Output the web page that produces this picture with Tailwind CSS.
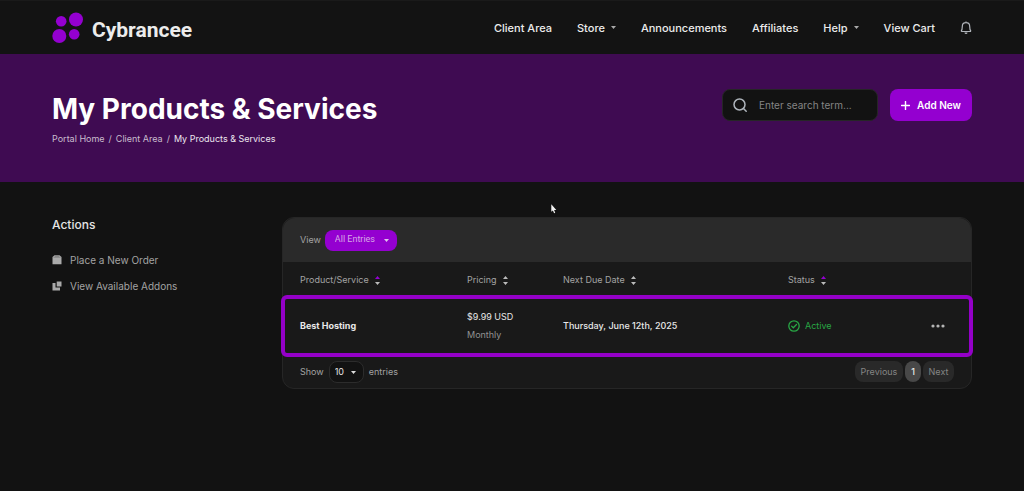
<!DOCTYPE html>
<html lang="en">

<head>
    <meta charset="UTF-8">
    <meta name="viewport" content="width=device-width, initial-scale=1.0">
    <title>My Products &amp; Services - Cybrancee</title>
    <script src="https://cdn.jsdelivr.net/npm/@tailwindcss/browser@4"></script>
</head>

<body class="min-h-screen bg-[#121212] font-['Inter','Liberation_Sans',sans-serif] text-[9px] text-[#a3a3a3]">
    <!-- Header -->
    <header class="flex h-[54px] items-center justify-between border-t border-[#1a1a1a] bg-[#131313] px-[52px]">
        <a href="#" class="flex items-center gap-[9px]">
            <svg class="h-8 w-[31px]" viewBox="0 0 31 32" fill="#9400d0">
                <circle cx="9.200" cy="9.300" r="5.300" />
                <circle cx="24" cy="7.500" r="7" />
                <circle cx="7.300" cy="24" r="7" />
                <circle cx="22.200" cy="22.300" r="5.300" />
            </svg>
            <span class="pt-1 font-['Roboto',sans-serif] text-[21px] leading-6 font-bold text-[#ececec]">Cybrancee</span>
        </a>
        <nav class="flex items-center gap-[25px] text-[11px] leading-4 font-medium text-[#ececec]">
            <a href="#">Client Area</a>
            <a href="#" class="flex items-center gap-1.5">Store
                <svg class="w-[5px]" viewBox="0 0 5 3" fill="#aaa"><path d="M0 0h5L2.500 3z" /></svg>
            </a>
            <a href="#">Announcements</a>
            <a href="#">Affiliates</a>
            <a href="#" class="flex items-center gap-1.5">Help
                <svg class="w-[5px]" viewBox="0 0 5 3" fill="#aaa"><path d="M0 0h5L2.500 3z" /></svg>
            </a>
            <a href="#">View Cart</a>
            <button type="button" aria-label="Notifications">
                <svg class="h-[14px] w-3" viewBox="0 0 12 14" fill="none" stroke="#b0b4ba" stroke-width="1.200" stroke-linejoin="round">
                    <path d="M1 10.500h10M1 10.500c1-1 1.300-2 1.300-5C2.300 3 4 1.700 6 1.700S9.700 3 9.700 5.500c0 3 .3 4 1.300 5M6 .5v1" />
                    <path d="M4.500 11.500a1.500 1.500 0 0 0 3 0z" fill="#b0b4ba" stroke="none" />
                </svg>
            </button>
        </nav>
    </header>

    <!-- Page banner -->
    <section class="flex h-32 items-start justify-between bg-[#3f0b52] px-[52px] pt-[35px]">
        <div>
            <h1 class="pt-0.5 text-[28px] leading-9 font-bold text-white">My Products &amp; Services</h1>
            <nav class="mt-1.5 flex gap-1 leading-3 text-[#c9bdce]">
                <a href="#">Portal Home</a><span>/</span>
                <a href="#">Client Area</a><span>/</span>
                <span class="text-[#ece6ee]">My Products &amp; Services</span>
            </nav>
        </div>
        <div class="flex gap-3">
            <label class="flex h-8 w-[156px] items-center gap-3 rounded-lg border border-[#262626] bg-[#121212] px-[10px]">
                <svg class="h-[14px] w-[14px] shrink-0" viewBox="0 0 14 14" fill="none" stroke="#aeb4bb" stroke-width="1.500" stroke-linecap="round">
                    <circle cx="6.500" cy="6.500" r="5.500" /><path d="m10.500 10.500 2.700 2.700" />
                </svg>
                <input type="search" aria-label="Search" placeholder="Enter search term..." class="w-full min-w-0 bg-transparent text-[10px] outline-none placeholder:text-[#858585]">
            </label>
            <button type="button" class="flex h-8 w-[82px] items-center justify-center gap-[7px] rounded-lg bg-[#9400d0] text-[10px] font-semibold text-white">
                <svg class="h-[9px] w-[9px]" viewBox="0 0 9 9" stroke="#fff" stroke-width="1.400" stroke-linecap="round"><path d="M4.500.5v8M.5 4.500h8" /></svg>
                Add New
            </button>
        </div>
    </section>

    <main class="flex px-[52px] pt-[35px]">
        <!-- Sidebar -->
        <aside class="w-[230px] shrink-0">
            <h2 class="text-xs leading-4 font-medium text-[#e4e4e4]">Actions</h2>
            <ul class="mt-5 flex flex-col gap-3 text-[10px] leading-[14px]">
                <li>
                    <a href="#" class="flex items-center gap-2">
                        <svg class="h-[10px] w-[10px]" viewBox="0 0 10 10" fill="#aaa"><path d="M2.500.3h5L9.500 2v7.300H.5V2z" /><path d="M1.500 2.200h7M3 1.200h4" stroke="#666" stroke-width=".6" /></svg>
                        Place a New Order
                    </a>
                </li>
                <li>
                    <a href="#" class="flex items-center gap-2">
                        <svg class="h-[10px] w-[10px]" viewBox="0 0 10 10" fill="#aaa"><path d="M.5 2h3v4.500H8v3H.5zM4.700.5h4.800v5H4.700z" /></svg>
                        View Available Addons
                    </a>
                </li>
            </ul>
        </aside>

        <!-- Services table -->
        <section class="min-w-0 flex-1 rounded-xl border border-[#262626] bg-[#191919]">
            <div class="flex h-11 items-center gap-1 rounded-t-xl bg-[#2a2a2a] px-[17px]">
                <label for="view">View</label>
                <div class="relative">
                    <select id="view" class="block h-[21px] w-[72px] appearance-none rounded-lg bg-[#9400d0] pl-[10px] font-['Roboto',sans-serif] text-[9px] text-[#d6a8e6]">
                        <option>All Entries</option>
                    </select>
                    <svg class="pointer-events-none absolute top-[9px] right-2 w-[5px]" viewBox="0 0 5 3" fill="#e0c4ea"><path d="M0 0h5L2.500 3z" /></svg>
                </div>
            </div>
            <table class="w-full table-fixed text-left">
                <colgroup>
                    <col class="w-[167px]">
                    <col class="w-24">
                    <col class="w-[225px]">
                    <col>
                    <col class="w-[60px]">
                </colgroup>
                <thead>
                    <tr class="h-[35px]">
                        <th class="pl-[17px] font-normal">
                            <button type="button" class="flex items-center gap-1.5">Product/Service
                                <svg class="mt-0.5 h-[9px] w-[5px]" viewBox="0 0 5 9" fill="#bbb"><path d="M0 3 2.500 0 5 3z" fill="#9400d0" /><path d="M0 6h5L2.500 9z" /></svg>
                            </button>
                        </th>
                        <th class="pl-[17px] font-normal">
                            <button type="button" class="flex items-center gap-1.5">Pricing
                                <svg class="mt-0.5 h-[9px] w-[5px]" viewBox="0 0 5 9" fill="#bbb"><path d="M0 3 2.500 0 5 3zM0 6h5L2.500 9z" /></svg>
                            </button>
                        </th>
                        <th class="pl-[17px] font-normal">
                            <button type="button" class="flex items-center gap-1.5">Next Due Date
                                <svg class="mt-0.5 h-[9px] w-[5px]" viewBox="0 0 5 9" fill="#bbb"><path d="M0 3 2.500 0 5 3zM0 6h5L2.500 9z" /></svg>
                            </button>
                        </th>
                        <th class="pl-[17px] font-normal">
                            <button type="button" class="flex items-center gap-1.5">Status
                                <svg class="mt-0.5 h-[9px] w-[5px]" viewBox="0 0 5 9" fill="#bbb"><path d="M0 3 2.500 0 5 3z" fill="#9400d0" /><path d="M0 6h5L2.500 9z" /></svg>
                            </button>
                        </th>
                        <td></td>
                    </tr>
                </thead>
                <tbody>
                    <tr class="h-[58px] rounded-sm text-[#e8e8e8] outline-4 -outline-offset-2 outline-[#9400c8]">
                        <td class="pl-[17px] font-bold">Best Hosting</td>
                        <td class="pl-[17px] leading-[18px]">$9.99 USD<div class="text-[#929292]">Monthly</div></td>
                        <td class="pl-[17px] font-medium">Thursday, June 12th, 2025</td>
                        <td class="pl-[17px]">
                            <span class="flex items-center gap-[5px] text-[#28a745]">
                                <svg class="h-3 w-3" viewBox="0 0 12 12" fill="none" stroke="currentColor" stroke-width="1.300" stroke-linecap="round"><circle cx="6" cy="6" r="5.200" /><path d="m3.600 6.100 1.700 1.700 3.200-3.300" /></svg>
                                Active
                            </span>
                        </td>
                        <td>
                            <button type="button" aria-label="More" class="ml-5 block">
                                <svg class="h-1 w-[14px]" viewBox="0 0 14 4" fill="#b5b5b5"><circle cx="2" cy="2" r="1.600" /><circle cx="7" cy="2" r="1.600" /><circle cx="12" cy="2" r="1.600" /></svg>
                            </button>
                        </td>
                    </tr>
                </tbody>
            </table>
            <div class="flex h-[33px] items-center justify-between px-[17px]">
                <div class="flex items-center gap-[5px]">
                    <label for="length">Show</label>
                    <div class="relative">
                        <select id="length" class="block h-[22px] w-[35px] appearance-none rounded-lg border border-[#2c2c2c] bg-[#121212] pl-[5px] text-[9px] text-[#e4e4e4]">
                            <option>10</option>
                        </select>
                        <svg class="pointer-events-none absolute top-[10px] right-2 w-[5px]" viewBox="0 0 5 3" fill="#ddd"><path d="M0 0h5L2.500 3z" /></svg>
                    </div>
                    <span>entries</span>
                </div>
                <div class="flex gap-0.5">
                    <button type="button" class="h-[21px] w-12 rounded-lg bg-[#292929] text-[#858585]">Previous</button>
                    <button type="button" class="h-[21px] w-4 rounded-lg bg-[#484848] font-medium text-[#e8e8e8]">1</button>
                    <button type="button" class="h-[21px] w-[31px] rounded-lg bg-[#292929] text-[#858585]">Next</button>
                </div>
            </div>
        </section>
    </main>

    <!-- Pointer -->
    <svg class="pointer-events-none absolute top-[204px] left-[551px] h-[10px] w-[6px]" viewBox="0 0 6 10"><path d="M.3.3v7.500l1.600-1.300 1.200 2.700 1.100-.5-1.100-2.600h2.200z" fill="#f2f2f2" /></svg>
</body>

</html>
